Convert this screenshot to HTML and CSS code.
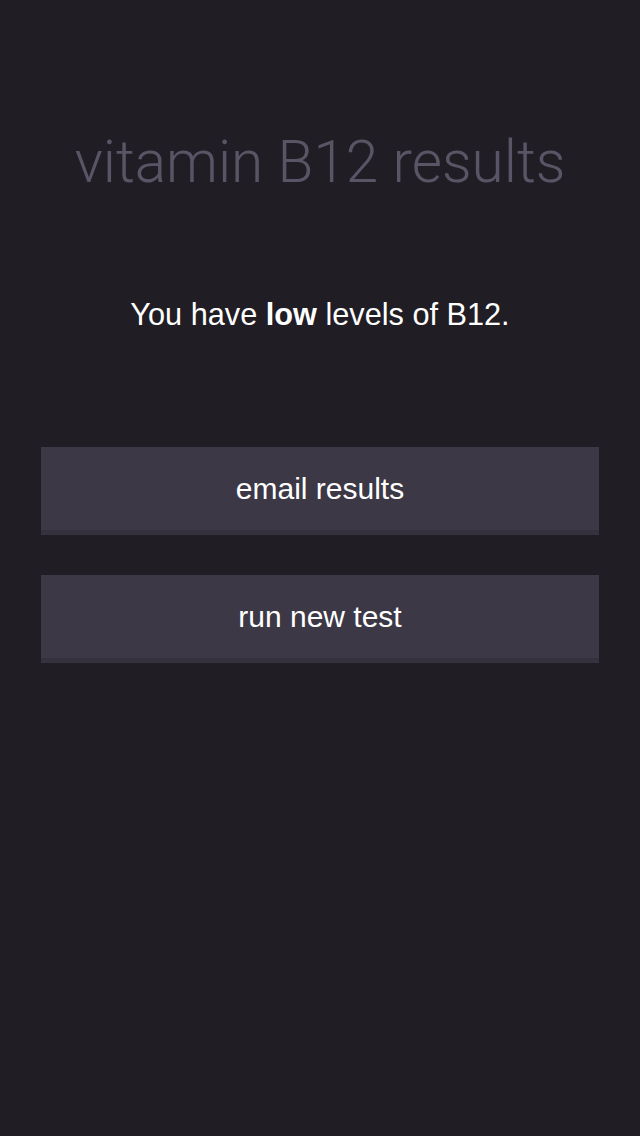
FILE: index.html
```html
<!DOCTYPE html>
<html>
<head>
<meta charset="utf-8">
<link rel="stylesheet" href="styles.css">
</head>
<body>
<main class="screen">
  <h1 class="title">vitamin B12 results</h1>
  <p class="summary">You have <strong>low</strong> levels of B12.</p>
  <div class="actions">
    <button class="btn">email results</button>
    <button class="btn">run new test</button>
  </div>
</main>
</body>
</html>
```
FILE: styles.css
```css
html, body {
  margin: 0;
  padding: 0;
  background: #201e24;
}
.screen {
  width: 640px;
  height: 1136px;
  display: flex;
  flex-direction: column;
  align-items: center;
  padding-top: 130px;
  box-sizing: border-box;
}
.title {
  margin: 0;
  font-family: "Roboto", "Liberation Sans", sans-serif;
  font-weight: 300;
  font-size: 58.5px;
  line-height: 64px;
  color: #5a5566;
}
.summary {
  margin: 101px 0 0;
  font-family: "Liberation Sans", Arial, sans-serif;
  font-size: 30.7px;
  line-height: 40px;
  color: #ffffff;
}
.summary strong {
  font-weight: bold;
}
.actions {
  margin-top: 112px;
  width: 558px;
  display: flex;
  flex-direction: column;
  gap: 40px;
}
.btn {
  height: 88px;
  border: 0;
  border-bottom: 5px solid #35313e;
  background: #3c3846;
  color: #ffffff;
  font-family: "Liberation Sans", Arial, sans-serif;
  font-size: 30px;
  padding: 0;
  margin: 0;
  display: block;
  width: 100%;
}
```
